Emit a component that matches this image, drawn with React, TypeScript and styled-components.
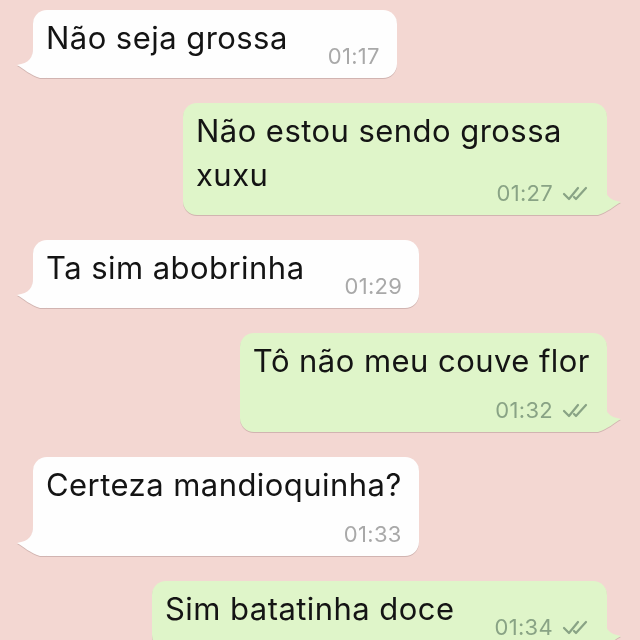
import React from "react";
import styled, { createGlobalStyle, css } from "styled-components";

const GlobalStyle = createGlobalStyle`
  html, body { margin: 0; padding: 0; }
  body {
    width: 640px;
    height: 640px;
    overflow: hidden;
    background: #f3d7d2;
    font-family: Inter, "Liberation Sans", sans-serif;
    -webkit-font-smoothing: antialiased;
  }
`;

const Chat = styled.div`
  display: flex;
  flex-direction: column;
  gap: 25px;
  padding: 10px 33px 0;
`;

const Row = styled.div<{ $out: boolean }>`
  display: flex;
  justify-content: ${(p) => (p.$out ? "flex-end" : "flex-start")};
`;

const Bubble = styled.div<{ $out: boolean; $max?: number }>`
  position: relative;
  display: flow-root;
  box-sizing: border-box;
  max-width: ${(p) => p.$max ?? 462}px;
  padding: 6px 17px 12px 13px;
  border-radius: 14px;
  background: ${(p) => (p.$out ? "#dff5c9" : "#fefefe")};
  filter: drop-shadow(0 1px 0.6px rgba(90, 60, 60, 0.22));
`;

const Tail = styled.svg<{ $out: boolean }>`
  position: absolute;
  bottom: 0;
  width: 30px;
  height: 30px;
  ${(p) =>
    p.$out
      ? css`
          right: -15px;
          transform: scaleX(-1);
        `
      : css`
          left: -17px;
        `}
`;

const Text = styled.span`
  font-size: 31px;
  line-height: 44px;
  color: #141414;
  letter-spacing: 0.45px;
`;

const Meta = styled.span<{ $stacked?: boolean; $out: boolean }>`
  display: flex;
  align-items: center;
  justify-content: flex-end;
  gap: 9px;
  font-size: 22px;
  line-height: 20px;
  letter-spacing: 0.3px;
  color: ${(p) => (p.$out ? "#89a385" : "#a9a9a9")};
  ${(p) =>
    p.$stacked
      ? css`
          margin-top: 17px;
        `
      : css`
          float: right;
          margin-left: 40px;
          margin-top: 30px;
        `}
`;

const Checks = styled.svg`
  width: 28px;
  height: 16px;
  flex: none;
`;

const DoubleCheck = () => (
  <Checks viewBox="0 0 28 16" fill="none" stroke="currentColor" strokeWidth="2.2" strokeLinecap="round" strokeLinejoin="round">
    <path d="M2 9 L7 14 L16 3" />
    <path d="M12 12 L14 14 L24 3" />
  </Checks>
);

type Msg = { out: boolean; text: string; time: string; stacked?: boolean; max?: number };

const messages: Msg[] = [
  { out: false, text: "Não seja grossa", time: "01:17" },
  { out: true, text: "Não estou sendo grossa xuxu", time: "01:27", max: 424 },
  { out: false, text: "Ta sim abobrinha", time: "01:29" },
  { out: true, text: "Tô não meu couve flor", time: "01:32", stacked: true },
  { out: false, text: "Certeza mandioquinha?", time: "01:33", stacked: true },
  { out: true, text: "Sim batatinha doce", time: "01:34" },
];

const Message = ({ m }: { m: Msg }) => {
  const fill = m.out ? "#dff5c9" : "#fefefe";
  return (
    <Row $out={m.out}>
      <Bubble $out={m.out} $max={m.max}>
        <Tail $out={m.out} viewBox="0 0 30 30">
          <path d="M17 0 C17 10 13 15 1 17 C8 21 14 27 24 30 L30 30 L30 0 Z" fill={fill} />
        </Tail>
        <Text>{m.text}</Text>
        <Meta $stacked={m.stacked} $out={m.out}>
          <span>{m.time}</span>
          {m.out && <DoubleCheck />}
        </Meta>
      </Bubble>
    </Row>
  );
};

export default function App() {
  return (
    <>
      <GlobalStyle />
      <Chat>
        {messages.map((m, i) => (
          <Message key={i} m={m} />
        ))}
      </Chat>
    </>
  );
}
